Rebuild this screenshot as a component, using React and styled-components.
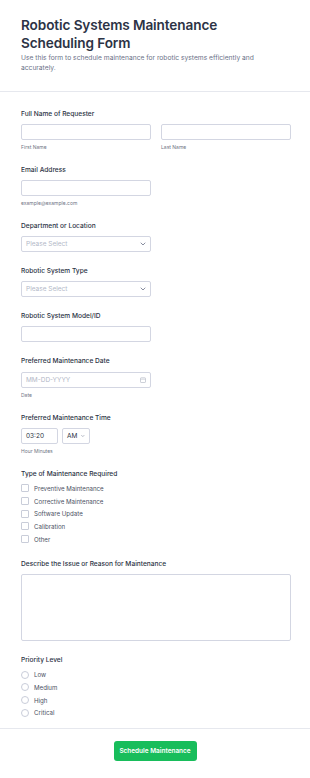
import React from 'react';
import styled, { createGlobalStyle } from 'styled-components';

const GlobalStyle = createGlobalStyle`
  body {
    margin: 0;
    background: #ffffff;
    font-family: Inter, "Noto Sans", "Liberation Sans", sans-serif;
    color: #2c3345;
  }
  * { box-sizing: border-box; }
`;

const Page = styled.div`
  width: 310px;
  background: #fff;
`;

const Header = styled.header`
  padding: 16px 21px 18px;
  border-bottom: 1px solid #e6e8ee;
`;

const Title = styled.h1`
  margin: 0;
  font-size: 13.6px;
  line-height: 18px;
  font-weight: 600;
  color: #2c3345;
  letter-spacing: -0.1px;
`;

const Subtitle = styled.p`
  margin: 1px 0 0;
  font-size: 6.7px;
  line-height: 10px;
  color: #6b7288;
`;

const Form = styled.form`
  display: flex;
  flex-direction: column;
  gap: 14px;
  padding: 17px 21px 9px;
  border-bottom: 1px solid #e6e8ee;
`;

const Field = styled.div`
  display: flex;
  flex-direction: column;
`;

const Label = styled.label`
  font-size: 6.6px;
  line-height: 10px;
  font-weight: 500;
  color: #2c3345;
  margin-bottom: ${p => (p.$gap ?? 5)}px;
`;

const Row = styled.div`
  display: flex;
  gap: ${p => p.$gap || 10}px;
`;

const Col = styled.div`
  display: flex;
  flex-direction: column;
  width: ${p => p.$w || 130}px;
`;

const Box = styled.div`
  width: ${p => p.$w || 130}px;
  height: ${p => p.$h || 16}px;
  border: 1px solid #d3d6e2;
  border-radius: 2px;
  background: #fff;
  display: flex;
  align-items: center;
  gap: 4px;
  padding: 0 4px;
  font-size: 6.5px;
  color: ${p => (p.$muted ? '#b3b8c7' : '#2c3345')};
`;

const Grow = styled.span`
  flex: 1;
`;

const Sub = styled.span`
  margin-top: 3px;
  font-size: 5px;
  line-height: 8px;
  color: #6f7585;
`;

const OptionList = styled.div`
  display: flex;
  flex-direction: column;
`;

const Option = styled.div`
  display: flex;
  align-items: center;
  gap: 5px;
  height: 12.7px;
  font-size: 6.15px;
  color: #4b5164;
`;

const Check = styled.span`
  width: 8px;
  height: 8px;
  border: 1px solid #c9cdd9;
  border-radius: ${p => (p.$round ? '50%' : '1px')};
  background: #fff;
`;

const Footer = styled.div`
  display: flex;
  justify-content: center;
  padding: 12px 0 16px;
`;

const Button = styled.button`
  width: 83px;
  height: 20px;
  border: none;
  border-radius: 3px;
  background: #18bd5b;
  color: #fff;
  font-family: inherit;
  font-size: 6.45px;
  font-weight: 600;
  padding: 0;
`;

const Chevron = () => (
  <svg width="6" height="4" viewBox="0 0 6 4">
    <path d="M1 1l2 2 2-2" fill="none" stroke="#7a8094" strokeWidth="0.9" strokeLinecap="round" />
  </svg>
);

const CalIcon = () => (
  <svg width="6" height="6" viewBox="0 0 6 6">
    <rect x="0.5" y="0.8" width="5" height="4.7" rx="0.6" fill="none" stroke="#b8bdc9" strokeWidth="0.7" />
    <path d="M0.5 2.2h5" stroke="#b8bdc9" strokeWidth="0.6" />
  </svg>
);

const maintenanceTypes = ['Preventive Maintenance', 'Corrective Maintenance', 'Software Update', 'Calibration', 'Other'];
const priorities = ['Low', 'Medium', 'High', 'Critical'];

const App = () => {
  return (
    <Page>
      <GlobalStyle />
      <Header>
        <Title>Robotic Systems Maintenance Scheduling Form</Title>
        <Subtitle>Use this form to schedule maintenance for robotic systems efficiently and accurately.</Subtitle>
      </Header>

      <Form>
        <Field>
          <Label>Full Name of Requester</Label>
          <Row>
            <Col>
              <Box />
              <Sub>First Name</Sub>
            </Col>
            <Col>
              <Box />
              <Sub>Last Name</Sub>
            </Col>
          </Row>
        </Field>

        <Field>
          <Label>Email Address</Label>
          <Box />
          <Sub>example@example.com</Sub>
        </Field>

        <Field>
          <Label>Department or Location</Label>
          <Box $muted>
            <Grow>Please Select</Grow>
            <Chevron />
          </Box>
        </Field>

        <Field>
          <Label>Robotic System Type</Label>
          <Box $muted>
            <Grow>Please Select</Grow>
            <Chevron />
          </Box>
        </Field>

        <Field>
          <Label>Robotic System Model/ID</Label>
          <Box />
        </Field>

        <Field>
          <Label $gap={6}>Preferred Maintenance Date</Label>
          <Box $muted>
            <Grow>MM-DD-YYYY</Grow>
            <CalIcon />
          </Box>
          <Sub>Date</Sub>
        </Field>

        <Field>
          <Label>Preferred Maintenance Time</Label>
          <Row $gap={4}>
            <Box $w={37}>03:20</Box>
            <Box $w={28}>
              <span>AM</span>
              <Chevron />
            </Box>
          </Row>
          <Sub>Hour Minutes</Sub>
        </Field>

        <Field>
          <Label $gap={3}>Type of Maintenance Required</Label>
          <OptionList>
            {maintenanceTypes.map(t => (
              <Option key={t}>
                <Check />
                {t}
              </Option>
            ))}
          </OptionList>
        </Field>

        <Field>
          <Label>Describe the Issue or Reason for Maintenance</Label>
          <Box $w={270} $h={67} />
        </Field>

        <Field>
          <Label $gap={3}>Priority Level</Label>
          <OptionList>
            {priorities.map(p => (
              <Option key={p}>
                <Check $round />
                {p}
              </Option>
            ))}
          </OptionList>
        </Field>
      </Form>

      <Footer>
        <Button type="button">Schedule Maintenance</Button>
      </Footer>
    </Page>
  );
};

export default App;
